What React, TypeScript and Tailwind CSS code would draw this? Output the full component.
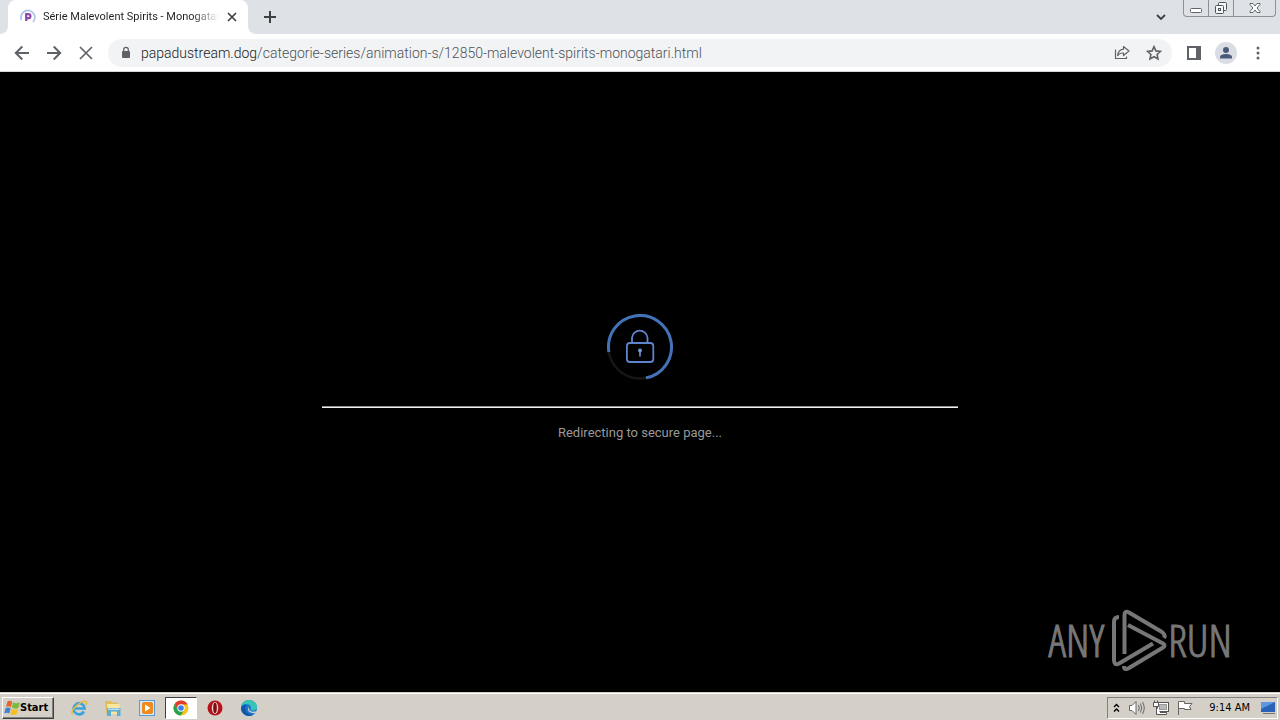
import type { ReactNode } from "react";

type IconButtonProps = { label: string; className: string; children: ReactNode };

function IconButton({ label, className, children }: IconButtonProps) {
  return (
    <button type="button" aria-label={label} className={`flex shrink-0 items-center justify-center ${className}`}>
      {children}
    </button>
  );
}

function PageIcon() {
  return (
    <svg className="shrink-0" width="16" height="16" viewBox="0 0 16 16" fill="none">
      <path d="M1.5 11A6.9 6.9 0 1 1 13 13" stroke="#a9c3f0" strokeWidth="1.8" />
      <path d="M6.2 12V5.2H8.4A2 2 0 0 1 8.4 9.2H6.2" stroke="#8b4aa6" strokeWidth="2.2" />
    </svg>
  );
}

function WindowControls() {
  return (
    <div className="flex h-[17px] shrink-0 self-start rounded-b-[4px] border border-t-0 border-[#8d9198]">
      <IconButton label="Minimize" className="w-[25px] border-r border-[#8d9198]">
        <svg width="14" height="14" viewBox="0 0 14 14" fill="#fff" stroke="#5f6368">
          <rect x="1.5" y="7.5" width="11" height="4" rx="1" />
        </svg>
      </IconButton>
      <IconButton label="Restore" className="w-[25px] border-r border-[#8d9198]">
        <svg width="14" height="14" viewBox="0 0 14 14" fill="#f4f5f7" stroke="#4f5358">
          <rect x="4.5" y="1.5" width="8" height="8" rx="1" />
          <rect x="1.5" y="4.5" width="8" height="8" rx="1" />
          <rect x="4.5" y="7.5" width="2" height="2" />
        </svg>
      </IconButton>
      <IconButton label="Close" className="w-[41px]">
        <svg width="14" height="12" viewBox="0 0 14 12" fill="#fff" stroke="#5f6368">
          <path d="M2 1.5H5L7 4L9 1.5H12V2.5L9 6L12 9.5V10.5H9L7 8L5 10.5H2V9.5L5 6L2 2.5Z" />
        </svg>
      </IconButton>
    </div>
  );
}

function TabStrip() {
  return (
    <header className="flex h-[34px] bg-[#dee1e6]">
      <div className="flex w-2 items-end bg-white">
        <div className="h-full w-2 rounded-br-lg bg-[#dee1e6]" />
      </div>
      <div className="flex w-60 shrink-0 items-center rounded-t-lg bg-white pl-3 pr-2">
        <PageIcon />
        <span className="ml-[7px] w-[176px] overflow-hidden whitespace-nowrap bg-linear-to-r from-[#202124] from-85% to-transparent bg-clip-text font-['Roboto',sans-serif] text-[11px] leading-4 text-transparent">
          Série Malevolent Spirits - Monogatari
        </span>
        <IconButton label="Close tab" className="ml-auto size-4">
          <svg width="10" height="10" viewBox="0 0 10 10" stroke="#3c4043" strokeWidth="1.7">
            <path d="M1 1L9 9M9 1L1 9" />
          </svg>
        </IconButton>
      </div>
      <div className="w-2 bg-white">
        <div className="h-full w-2 rounded-bl-lg bg-[#dee1e6]" />
      </div>
      <IconButton label="New tab" className="w-7">
        <svg width="12" height="12" viewBox="0 0 12 12" stroke="#3c4043" strokeWidth="2">
          <path d="M6 0V12M0 6H12" />
        </svg>
      </IconButton>
      <IconButton label="Search tabs" className="ml-auto mr-2 w-7">
        <svg width="10" height="6" viewBox="0 0 10 6" fill="none" stroke="#3c4043" strokeWidth="1.8">
          <path d="M1 1L5 5L9 1" />
        </svg>
      </IconButton>
      <WindowControls />
      <div className="w-1" />
    </header>
  );
}

function Toolbar() {
  return (
    <nav className="flex h-[38px] items-center border-b border-[#d5d7da] bg-white px-2">
      <IconButton label="Back" className="mr-1 size-7">
        <svg width="16" height="16" viewBox="0 0 16 16" fill="none" stroke="#5f6368" strokeWidth="2">
          <path d="M15 8H2M8.3 1.5L1.8 8L8.3 14.5" />
        </svg>
      </IconButton>
      <IconButton label="Forward" className="mr-1 size-7">
        <svg width="16" height="16" viewBox="0 0 16 16" fill="none" stroke="#5f6368" strokeWidth="2">
          <path d="M1 8H14M7.7 1.5L14.2 8L7.7 14.5" />
        </svg>
      </IconButton>
      <IconButton label="Stop loading" className="mr-2 size-7">
        <svg width="14" height="14" viewBox="0 0 14 14" stroke="#5f6368" strokeWidth="1.7">
          <path d="M1 1L13 13M13 1L1 13" />
        </svg>
      </IconButton>
      <div className="flex h-7 min-w-0 flex-1 items-center rounded-full bg-[#f1f3f4] pl-3">
        <svg className="shrink-0" width="12" height="14" viewBox="0 0 12 14" fill="none">
          <rect x="2" y="5" width="8" height="7" rx="1" fill="#5f6368" />
          <path d="M3.7 5.5V3.7A2.3 2.3 0 0 1 8.3 3.7V5.5" stroke="#5f6368" strokeWidth="1.3" />
        </svg>
        <a
          href="#page"
          className="ml-[9px] min-w-0 flex-1 truncate font-['Roboto','Noto_Sans',sans-serif] text-[14px] font-light leading-5 text-[#4d5156]"
        >
          <span className="text-[#202124]">papadustream.dog</span>
          /categorie-series/animation-s/12850-malevolent-spirits-monogatari.html
        </a>
        <IconButton label="Share" className="mr-1 size-7">
          <svg width="16" height="16" viewBox="0 0 16 16" fill="none" stroke="#5f6368" strokeWidth="1.2">
            <path d="M1.5 4.5V13.5H12.5V11.5" />
            <path d="M9.5 1.5L15 6L9.5 10.5V8C6.5 7.8 4.8 8.9 3.6 10.7C4 7 6 4.5 9.5 4.1Z" strokeLinejoin="round" />
          </svg>
        </IconButton>
        <IconButton label="Bookmark" className="mr-1 size-7">
          <svg width="16" height="16" viewBox="0 0 16 16" fill="none" stroke="#5f6368" strokeWidth="1.6">
            <path d="M8 1.7L9.9 5.9L14.5 6.4L11.1 9.5L12 14L8 11.7L4 14L4.9 9.5L1.5 6.4L6.1 5.9Z" />
          </svg>
        </IconButton>
      </div>
      <IconButton label="Side panel" className="ml-2 size-7">
        <svg width="14" height="14" viewBox="0 0 14 14" fill="none" stroke="#5f6368" strokeWidth="2">
          <path d="M1 1H13V13H1Z" />
          <path d="M11 1V13" strokeWidth="4" />
        </svg>
      </IconButton>
      <IconButton label="Profile" className="ml-1 size-7">
        <svg width="22" height="22" viewBox="0 0 22 22">
          <circle cx="11" cy="11" r="11" fill="#dadde3" />
          <circle cx="11" cy="8" r="3" fill="#4b5a78" />
          <path d="M5 16.5V15C5 12.8 9 12 11 12S17 12.8 17 15V16.5Z" fill="#4b5a78" />
        </svg>
      </IconButton>
      <IconButton label="Menu" className="ml-1 size-7">
        <svg width="4" height="14" viewBox="0 0 4 14" fill="#5f6368">
          <circle cx="2" cy="2" r="1.5" />
          <circle cx="2" cy="7" r="1.5" />
          <circle cx="2" cy="12" r="1.5" />
        </svg>
      </IconButton>
    </nav>
  );
}

function SecureSpinner() {
  return (
    <svg width="66" height="66" viewBox="0 0 66 66" fill="none">
      <circle cx="33" cy="33" r="31.5" stroke="#161616" strokeWidth="2.5" />
      <path d="M1.9 38A31.5 31.5 0 1 1 38.9 63.9" stroke="#4472b8" strokeWidth="3" />
      <rect x="19.9" y="29" width="26.4" height="19" rx="3" stroke="#5d84cc" strokeWidth="1.8" />
      <path d="M25 29V23.5A7.8 7.8 0 0 1 40.5 23.5V29" stroke="#5d84cc" strokeWidth="1.8" />
      <circle cx="33" cy="36.5" r="2" fill="#7396d8" />
      <path d="M33 36V42.5" stroke="#7396d8" strokeWidth="1.6" />
    </svg>
  );
}

function Watermark() {
  return (
    <div className="absolute bottom-5 right-12 flex items-center font-['Open_Sans_Condensed_Light','Open_Sans_Condensed','Liberation_Sans_Narrow',sans-serif] text-[44px] font-light leading-[64px] text-[#777777] [-webkit-text-stroke:1px_#777777]">
      <span>ANY</span>
      <svg className="ml-2" width="56" height="64" viewBox="0 0 56 64" fill="none" stroke="#777777" strokeWidth="4" strokeLinejoin="round">
        <path d="M7 9Q2 9 2 14V52Q2 58 7 55.5L41 35.5" />
        <path d="M12.5 46V7Q12.5 2 17 4.5L50 24Q54 27 52 30" />
        <path d="M16 17L51 35.5Q54 37.5 51 39.5L17 60Q12 63 12 58" />
      </svg>
      <span>RUN</span>
    </div>
  );
}

function StartFlag() {
  return (
    <svg className="shrink-0" width="16" height="16" viewBox="0 0 16 16">
      <path d="M3.5 1.5Q6 0 8.2 1.8L6.9 7.3Q4.5 5.5 2 7Z" fill="#e8622c" />
      <path d="M9 2.2Q12 4 15.8 2.3L14.3 8Q11 9.5 7.8 7.6Z" fill="#7db93b" />
      <path d="M1.7 8Q4.5 6.7 6.6 8.2L5.3 13.4Q3 12 .2 13.3Z" fill="#3f83cf" />
      <path d="M7.5 8.7Q11 10.5 14 9L12.6 14.3Q10 16 6.2 13.9Z" fill="#f4c022" />
    </svg>
  );
}

function ExplorerIcon() {
  return (
    <svg width="18" height="18" viewBox="0 0 18 18" fill="none">
      <path d="M14 12.5A5.6 5.6 0 1 1 14.7 9.5H5" stroke="#39a3e0" strokeWidth="2.6" />
      <path d="M2.5 15.5C-1 13 9 2 15.5 2.5C17.5 3 16.5 5 15.5 6" stroke="#e8b93a" strokeWidth="1.5" />
    </svg>
  );
}

function FolderIcon() {
  return (
    <svg width="18" height="18" viewBox="0 0 18 18">
      <path d="M1 2H7L8 3.5H14V14H2Z" fill="#dfbd58" />
      <path d="M3 5H15.5V15H4Z" fill="#f6e6a0" />
      <path d="M3 9H16.5V17H13V12.5H7V17H3Z" fill="#5faed2" />
      <path d="M4 9.5H15.5V11H4Z" fill="#b8dff0" />
    </svg>
  );
}

function MediaIcon() {
  return (
    <svg width="18" height="18" viewBox="0 0 18 18">
      <rect x="1.5" y="1.5" width="15" height="15" fill="#d3e9f8" stroke="#5c9bd1" />
      <rect x="4" y="3" width="11" height="12" rx="2" fill="#f08a1c" />
      <path d="M7 5.5L12.5 9L7 12.5Z" fill="#fff" />
    </svg>
  );
}

function ChromeIcon() {
  return (
    <svg width="16" height="16" viewBox="0 0 16 16">
      <circle cx="8" cy="8" r="7.5" fill="#f9c513" />
      <path d="M1.5 4.2A7.5 7.5 0 0 1 14.6 4.5H8L5 9.8Z" fill="#e33b2e" />
      <path d="M1.5 4.2A7.5 7.5 0 0 0 7.8 15.5L11.2 9.8L5 9.8Z" fill="#2da24c" />
      <circle cx="8" cy="8" r="3.7" fill="#fff" />
      <circle cx="8" cy="8" r="2.8" fill="#3b7de9" />
    </svg>
  );
}

function OperaIcon() {
  return (
    <svg width="16" height="16" viewBox="0 0 16 16">
      <circle cx="8" cy="8" r="7.5" fill="#b5121b" />
      <ellipse cx="8" cy="8" rx="3.2" ry="6" fill="#e9d5d3" />
      <ellipse cx="8" cy="8" rx="1.8" ry="5.2" fill="#7d0d13" />
    </svg>
  );
}

function EdgeIcon() {
  return (
    <svg width="18" height="18" viewBox="0 0 18 18">
      <circle cx="9" cy="9" r="8" fill="#1b78cf" />
      <path d="M1 8C2 3 5.5 1 9 1C14 1 17 4.5 17 8C17 11 14 12 11.5 11.5C10 11 11 10 11 8.5C11 6 8 5 6 5C3.5 5 2 6.5 1 8Z" fill="#37c5b5" />
      <path d="M1 9C1.5 6.5 4 5.5 6.5 6C4.5 8 5 12.5 9 15C11 16 13 15.5 14 15C10 19 1 16.5 1 9Z" fill="#1257a8" />
      <path d="M9 8C8 11 11 14 17 12L15.5 14C10 15 6 11 9 8Z" fill="#d4d0c8" />
    </svg>
  );
}

function Taskbar() {
  return (
    <footer className="flex h-7 items-center border-t border-[#d4d0c8] bg-[#d4d0c8] px-[2px] shadow-[inset_0_1px_0_#ffffff]">
      <button
        type="button"
        className="mt-[2px] flex h-[22px] w-[52px] items-center border border-b-[#404040] border-l-white border-r-[#404040] border-t-white pl-px text-[11px] font-bold leading-4 text-black shadow-[inset_-1px_-1px_0_#808080]"
      >
        <StartFlag />
        Start
      </button>
      <div className="ml-2 mt-[2px] flex h-[22px] items-center">
        <IconButton label="Internet Explorer" className="h-[22px] w-[34px]"><ExplorerIcon /></IconButton>
        <IconButton label="Files" className="h-[22px] w-[34px]"><FolderIcon /></IconButton>
        <IconButton label="Media Player" className="h-[22px] w-[34px]"><MediaIcon /></IconButton>
        <IconButton label="Chrome" className="mx-px h-[22px] w-8 border border-b-white border-l-[#404040] border-r-white border-t-[#404040] bg-white">
          <ChromeIcon />
        </IconButton>
        <IconButton label="Opera" className="h-[22px] w-[34px]"><OperaIcon /></IconButton>
        <IconButton label="Edge" className="h-[22px] w-[34px]"><EdgeIcon /></IconButton>
      </div>
      <div className="ml-auto mt-[2px] flex h-[22px] items-center border border-b-white border-l-[#808080] border-r-white border-t-[#808080] pl-1">
        <IconButton label="Show hidden icons" className="size-2">
          <svg width="7" height="10" viewBox="0 0 7 10" fill="none" stroke="#000" strokeWidth="1.4">
            <path d="M1 4L3.5 1.5L6 4M1 8.5L3.5 6L6 8.5" />
          </svg>
        </IconButton>
        <IconButton label="Volume" className="ml-2 h-5 w-[18px]">
          <svg width="18" height="16" viewBox="0 0 18 16" fill="none" stroke="#666">
            <path d="M1.5 5.5H4L8 1.5V14.5L4 10.5H1.5Z" fill="#fff" />
            <path d="M10.5 5Q12 8 10.5 11M12.5 3.5Q15 8 12.5 12.5M14.5 2Q18 8 14.5 14" />
          </svg>
        </IconButton>
        <IconButton label="Network" className="ml-[6px] h-5 w-[18px]">
          <svg width="18" height="16" viewBox="0 0 18 16" fill="#fff" stroke="#555">
            <rect x="5.5" y="2.5" width="11" height="9" />
            <rect x="7.5" y="4.5" width="7" height="5" fill="#b9b9b5" stroke="#999" />
            <path d="M1.5 2.5H6.5V6.5H1.5ZM2.5 .5V2M5.5 .5V2M4.5 7V14.5H14.5V12.5H8" />
          </svg>
        </IconButton>
        <IconButton label="Action Center" className="ml-[6px] h-5 w-[18px]">
          <svg width="18" height="16" viewBox="0 0 18 16" fill="#fff" stroke="#666">
            <path d="M2.5 15V1.5H8.5V3.5H16L13.5 6.5L15 9.5H8.5V8.5H3" />
          </svg>
        </IconButton>
        <time className="ml-[15px] whitespace-nowrap text-[11px] leading-4 text-black">9:14 AM</time>
        <IconButton label="Show desktop" className="ml-[9px] h-5 w-[18px]">
          <svg width="16" height="14" viewBox="0 0 16 14">
            <path d="M1 1H15V11H1Z" fill="#2a62b8" />
            <path d="M1 1H15L1 8Z" fill="#5e98e0" />
            <path d="M3 12H15V13H3Z" fill="#777" />
          </svg>
        </IconButton>
      </div>
    </footer>
  );
}

export default function App() {
  return (
    <div className="flex min-h-screen flex-col bg-black font-['DejaVu_Sans_Condensed','Noto_Sans',sans-serif]">
      <TabStrip />
      <Toolbar />
      <main id="page" className="relative flex flex-1 flex-col items-center justify-center">
        <SecureSpinner />
        <div className="mt-[26px] h-[2px] w-[636px] max-w-full border-t border-[#8f8f8f] bg-[#f0f0f0]" />
        <p className="mb-[7px] mt-[15px] font-['Roboto','Liberation_Sans',sans-serif] text-[13px] leading-5 text-[#999999]">
          Redirecting to secure page...
        </p>
        <Watermark />
      </main>
      <Taskbar />
    </div>
  );
}
